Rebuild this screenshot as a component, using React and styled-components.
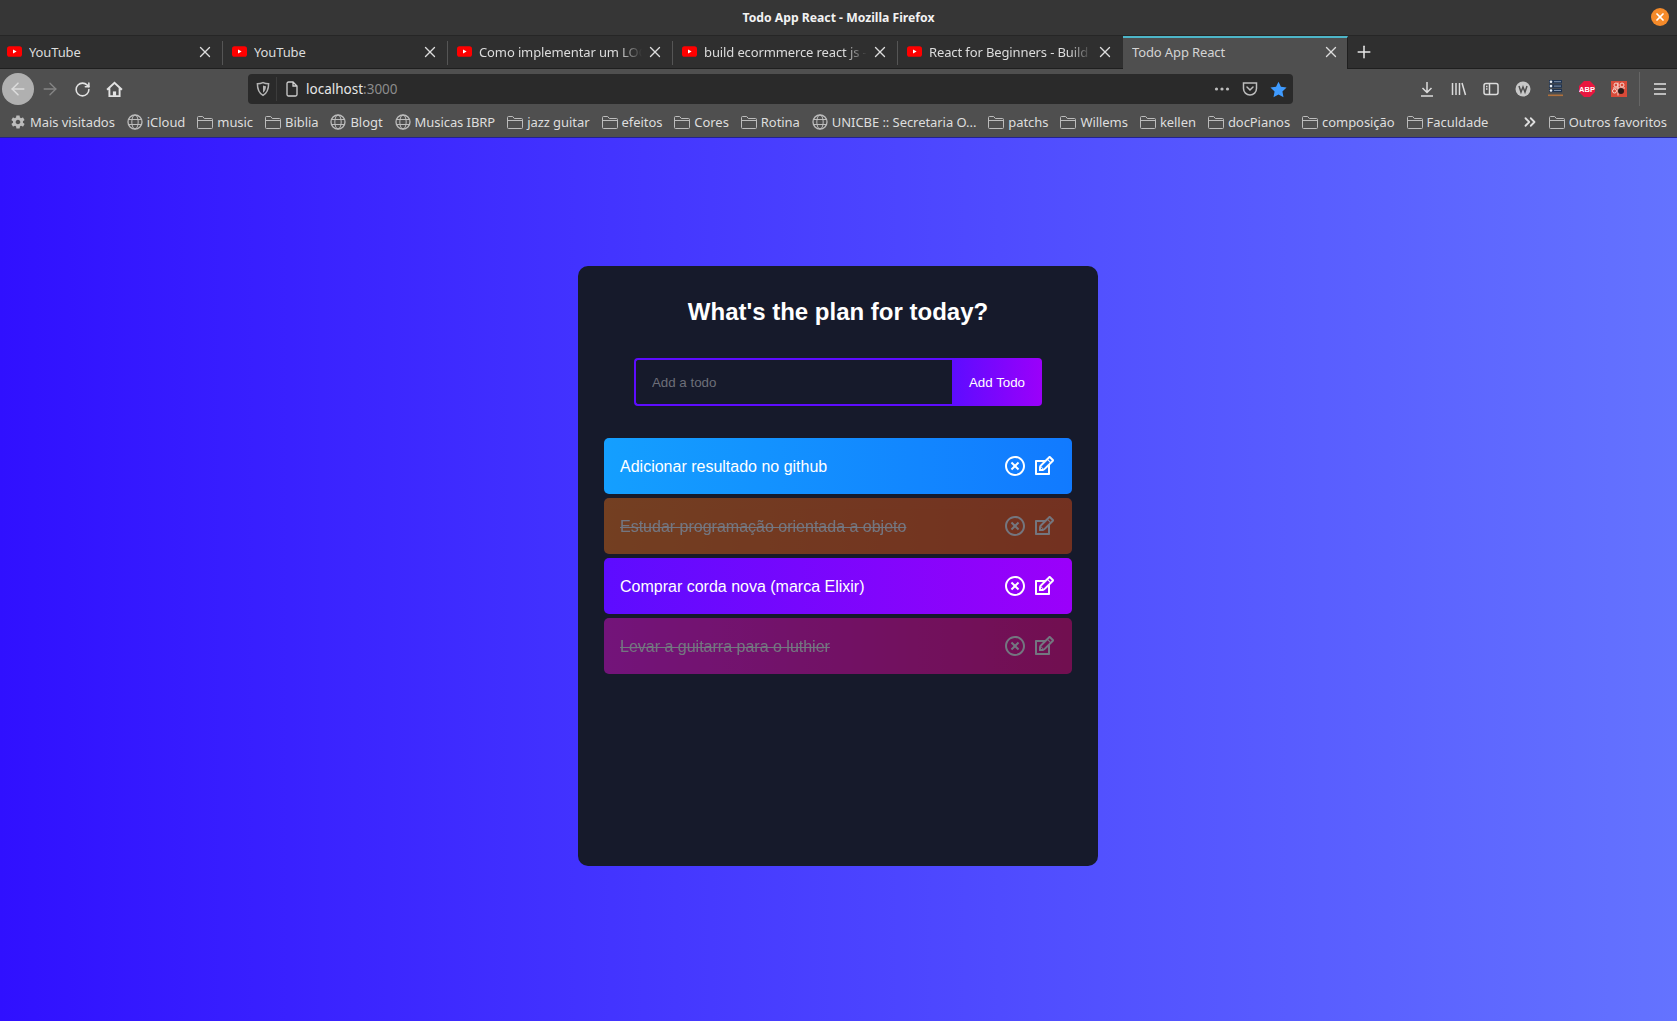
import styled, { createGlobalStyle } from 'styled-components';
import {
  X, ArrowLeft, ArrowRight, RotateCw, Plus, ChevronsRight,
} from 'lucide-react';
import { RiCloseCircleLine } from 'react-icons/ri';
import { TiEdit } from 'react-icons/ti';
import { IoMdSettings } from 'react-icons/io';

const tabs = [
  { title: 'YouTube', yt: true },
  { title: 'YouTube', yt: true },
  { title: 'Como implementar um LOG', yt: true, fade: true },
  { title: 'build ecormmerce react js -', yt: true, fade: true },
  { title: 'React for Beginners - Build', yt: true, fade: true },
  { title: 'Todo App React', active: true },
];

const bookmarks = [
  { label: 'Mais visitados', icon: 'gear' },
  { label: 'iCloud', icon: 'globe' },
  { label: 'music' },
  { label: 'Biblia' },
  { label: 'Blogt', icon: 'globe' },
  { label: 'Musicas IBRP', icon: 'globe' },
  { label: 'jazz guitar' },
  { label: 'efeitos' },
  { label: 'Cores' },
  { label: 'Rotina' },
  { label: 'UNICBE :: Secretaria O...', icon: 'globe' },
  { label: 'patchs' },
  { label: 'Willems' },
  { label: 'kellen' },
  { label: 'docPianos' },
  { label: 'composição' },
  { label: 'Faculdade' },
];

const todos = [
  { id: 1, text: 'Adicionar resultado no github', tone: 'blue' },
  { id: 2, text: 'Estudar programação orientada a objeto', tone: 'orange', done: true },
  { id: 3, text: 'Comprar corda nova (marca Elixir)', tone: 'purple' },
  { id: 4, text: 'Levar a guitarra para o luthier', tone: 'pink', done: true },
];

const gradients = {
  blue: 'rgb(20, 159, 255), rgb(17, 122, 255)',
  orange: 'rgb(255, 118, 20), rgb(255, 84, 17)',
  purple: 'rgb(93, 12, 255), rgb(155, 0, 250)',
  pink: 'rgb(255, 12, 241), rgb(250, 0, 135)',
};

const GlobalStyle = createGlobalStyle`
  * { box-sizing: border-box; }
  html, body { margin: 0; padding: 0; height: 100%; overflow: hidden; }
  #root { height: 100%; }
`;

const Window = styled.div`
  display: flex;
  flex-direction: column;
  height: 100%;
  font-family: "Noto Sans", sans-serif;
  color: #e0e0e0;
`;

const TitleBar = styled.header`
  position: relative;
  display: flex;
  align-items: center;
  justify-content: center;
  height: 36px;
  padding-bottom: 1px;
  background: #363636;
  border-bottom: 1px solid #262626;
  color: #f2f2f2;
  font-size: 12.2px;
  font-weight: 700;
`;

const CloseDot = styled.span`
  position: absolute;
  right: 8px;
  top: 8px;
  width: 18px;
  height: 18px;
  border-radius: 50%;
  background: #f48a2a;
  color: #fff;
  display: flex;
  align-items: center;
  justify-content: center;
`;

const TabStrip = styled.div`
  display: flex;
  height: 33px;
  background: #2f2f2f;
  border-bottom: 1px solid #1f1f1f;
`;

const Tab = styled.div`
  position: relative;
  display: flex;
  align-items: center;
  flex: 0 0 225px;
  width: 225px;
  height: ${(p) => (p.$active ? '33px' : '32px')};
  padding: 0 9px 1px 7px;
  font-size: 13px;
  letter-spacing: -0.12px;
  color: #dcdcdc;
  svg { flex: none; }
  ${(p) => p.$active && `
    margin-left: -2px;
    background: #4f4f4f;
    border-top: 2px solid #4db6c9;
    border-right: 1px solid #1f1f1f;
    padding: 0 5px 3px 9px;
    color: #d4d4d4;
    z-index: 1;
  `}
  ${(p) => p.$divider && `
    &::after {
      content: '';
      position: absolute;
      right: 2px;
      top: 5px;
      bottom: 3px;
      width: 1px;
      background: #555;
    }
  `}
`;

const TabTitle = styled.span`
  flex: 1;
  min-width: 0;
  margin-left: ${(p) => (p.$noIcon ? '0' : '7px')};
  white-space: nowrap;
  overflow: hidden;
  ${(p) => p.$fade && `
    -webkit-mask-image: linear-gradient(90deg, #000 86%, transparent 100%);
    mask-image: linear-gradient(90deg, #000 86%, transparent 100%);
  `}
`;

const TabClose = styled.span`
  display: flex;
  margin-left: 4px;
  margin-right: 2px;
  color: #dcdcdc;
`;

const NewTab = styled.span`
  display: flex;
  align-items: center;
  margin-left: 6px;
  padding-bottom: 1px;
  color: #e8e8e8;
`;

const Toolbar = styled.div`
  display: flex;
  align-items: center;
  height: 40px;
  background: #4f4f4f;
  padding: 0 1px 0 2px;
`;

const NavButton = styled.span`
  display: flex;
  align-items: center;
  justify-content: center;
  flex: 0 0 32px;
  height: 32px;
  color: ${(p) => (p.$dim ? '#858585' : '#e2e2e2')};
  ${(p) => p.$back && `
    border-radius: 50%;
    background: #b0b0b0;
    color: #dcdcdc;
  `}
`;

const UrlBar = styled.div`
  display: flex;
  align-items: center;
  width: 1045px;
  height: 30px;
  margin-left: 118px;
  padding: 0 1px 0 7px;
  border-radius: 4px;
  background: #2a2a2a;
  font-size: 13.5px;
  color: #e6e6e6;
`;

const UrlGlyph = styled.span`
  display: flex;
  color: ${(p) => p.$color};
`;

const UrlDivider = styled.span`
  width: 1px;
  height: 24px;
  margin: 0 7px 0 5px;
  background: #3c3c3c;
`;

const UrlText = styled.span`
  flex: 1;
  margin-left: 6px;
  span { color: #8c8c8c; }
`;

const UrlAction = styled.span`
  display: flex;
  align-items: center;
  justify-content: center;
  width: 28px;
  color: #bdbdbd;
`;

const ToolGroup = styled.div`
  display: flex;
  align-items: center;
  margin-left: auto;
`;

const ToolSeparator = styled.span`
  width: 1px;
  height: 34px;
  margin: 0 4px;
  background: #666;
`;

const Bookmarks = styled.nav`
  display: flex;
  align-items: center;
  height: 28px;
  background: #4f4f4f;
  padding: 0 10px 3px;
  font-size: 13px;
  letter-spacing: -0.06px;
  color: #dedede;
  white-space: nowrap;
`;

const Bookmark = styled.span`
  display: flex;
  align-items: center;
  gap: 4px;
  margin-right: 12px;
  svg { flex: none; color: #bcbcbc; }
  &:last-child { margin-right: 0; }
`;

const BookmarksEnd = styled.div`
  display: flex;
  align-items: center;
  margin-left: auto;
  gap: 10px;
`;

const Page = styled.main`
  flex: 1;
  padding-right: 1px;
  background: linear-gradient(90deg, rgb(48, 16, 255) 0%, rgb(100, 115, 255) 100%);
  border-top: 1px solid #23238f;
`;

const TodoCard = styled.section`
  display: flex;
  flex-direction: column;
  align-items: center;
  width: 520px;
  min-height: 600px;
  margin: 128px auto 0;
  padding-bottom: 32px;
  border-radius: 10px;
  background: #161a2b;
  font-family: "Liberation Sans", Arial, sans-serif;
  text-align: center;
`;

const Heading = styled.h1`
  margin: 32px 0;
  font-size: 24px;
  font-weight: 700;
  color: #fff;
`;

const TodoForm = styled.form`
  display: flex;
  height: 48px;
  margin-bottom: 32px;
`;

const TodoInput = styled.input`
  width: 318px;
  padding: 14px 32px 14px 16px;
  border: 2px solid #5d0cff;
  border-right: 0;
  border-radius: 4px 0 0 4px;
  outline: none;
  background: transparent;
  color: #fff;
  font-family: inherit;
  font-size: 13.33px;

  &::placeholder { color: #6d6f79; opacity: 1; }
`;

const AddButton = styled.button`
  padding: 16px 17px;
  border: none;
  border-radius: 0 4px 4px 0;
  outline: none;
  background: linear-gradient(90deg, #5d0cff 0%, #9b00fa 100%);
  color: #fff;
  font-family: inherit;
  font-size: 13.33px;
`;

const TodoRow = styled.div`
  display: flex;
  align-items: center;
  justify-content: space-between;
  width: 468px;
  height: 56px;
  margin: 0 0 4px;
  padding: 16px;
  border-radius: 5px;
  background: linear-gradient(90deg, ${(p) => gradients[p.$tone]});
  color: #fff;
  font-size: 16px;
  ${(p) => p.$done && 'text-decoration: line-through; opacity: 0.4;'}
`;

const TodoText = styled.span`
  padding-top: 2px;
`;

const RowIcons = styled.div`
  display: flex;
  align-items: center;
  font-size: 24px;
`;

const DeleteIcon = styled(RiCloseCircleLine)`
  margin-right: 5px;
`;

const YouTubeIcon = () => (
  <svg width="15" height="11" viewBox="0 0 14 10" aria-hidden="true">
    <rect width="14" height="10" rx="2.4" fill="#f00" />
    <path d="M5.6 3.1 9 5 5.6 6.9z" fill="#fff" />
  </svg>
);

const FolderIcon = () => (
  <svg width="16" height="16" viewBox="0 0 16 16" fill="none" stroke="currentColor" aria-hidden="true">
    <path d="M.5 13.500v-10a1 1 0 0 1 1-1h4.200l1.600 2h7.200a1 1 0 0 1 1 1v8a1 1 0 0 1-1 1h-13a1 1 0 0 1-1-1zM.5 6.500h15" />
  </svg>
);

const GlobeIcon = () => (
  <svg width="16" height="16" viewBox="0 0 16 16" fill="none" stroke="currentColor" aria-hidden="true">
    <circle cx="8" cy="8" r="7" strokeWidth="1.3" />
    <ellipse cx="8" cy="8" rx="3.2" ry="7" />
    <path d="M1.400 5.500h13.200M1.400 10.500h13.200" />
  </svg>
);

const HomeIcon = () => (
  <svg width="17" height="17" viewBox="0 0 16 16" fill="none" stroke="currentColor" strokeWidth="1.8" aria-hidden="true">
    <path d="M1 8.200 8 1.600l7 6.600M3.200 6.800v7.400h9.600V6.800" />
    <path d="M6.500 14V9.800h3V14" fill="currentColor" stroke="none" />
  </svg>
);

const ShieldIcon = () => (
  <svg width="16" height="16" viewBox="0 0 16 16" fill="none" stroke="currentColor" strokeWidth="1.5" aria-hidden="true">
    <path d="M8 1.600c2 .9 3.900 1.200 5.600 1.200 0 5.600-1.600 9.400-5.600 11.600C4 12.200 2.400 8.400 2.400 2.800 4.100 2.800 6 2.500 8 1.600z" />
    <path d="M8 4.500c1 .4 2 .6 3 .7-.1 3-1 5-3 6.500z" fill="currentColor" stroke="none" />
  </svg>
);

const PageIcon = () => (
  <svg width="16" height="16" viewBox="0 0 16 16" fill="none" stroke="currentColor" strokeWidth="1.3" aria-hidden="true">
    <path d="M3 2.500A1.500 1.500 0 0 1 4.500 1H9l4 4v8.500a1.500 1.500 0 0 1-1.500 1.500h-7A1.500 1.500 0 0 1 3 13.500zM9 1v4h4" />
  </svg>
);

const PocketIcon = () => (
  <svg width="16" height="16" viewBox="0 0 16 16" fill="none" stroke="currentColor" strokeWidth="1.5" aria-hidden="true">
    <path d="M1.500 2h13v5.500a6.500 6.500 0 0 1-13 0z" />
    <path d="M5 6l3 3 3-3" strokeLinecap="round" />
  </svg>
);

const StarIcon = () => (
  <svg width="17" height="17" viewBox="0 0 16 16" aria-hidden="true">
    <path d="M8 .6l2.300 4.900 5.300.7-3.900 3.700 1 5.300L8 12.700l-4.700 2.500 1-5.300L.4 6.200l5.300-.7z" fill="#3f9bff" />
  </svg>
);

const DotsIcon = () => (
  <svg width="16" height="16" viewBox="0 0 16 16" fill="currentColor" aria-hidden="true">
    <circle cx="2.500" cy="8" r="1.600" />
    <circle cx="8" cy="8" r="1.600" />
    <circle cx="13.500" cy="8" r="1.600" />
  </svg>
);

const DownloadIcon = () => (
  <svg width="16" height="16" viewBox="0 0 16 16" fill="none" stroke="#dcdcdc" strokeWidth="1.500" aria-hidden="true">
    <path d="M8 1v10M3.500 7 8 11.500 12.500 7M2 15h12" />
  </svg>
);

const LibraryIcon = () => (
  <svg width="16" height="16" viewBox="0 0 16 16" fill="none" stroke="#dcdcdc" strokeWidth="1.500" aria-hidden="true">
    <path d="M1.500 2v12M5 2v12M8.500 2v12M11 2l3.500 12" />
  </svg>
);

const SidebarIcon = () => (
  <svg width="16" height="16" viewBox="0 0 16 16" fill="none" stroke="#dcdcdc" strokeWidth="1.500" aria-hidden="true">
    <rect x="1" y="2.500" width="14" height="11" rx="2" />
    <path d="M6.500 2.500v11M3 5.500h1.500M3 8h1.500" />
  </svg>
);

const WikiIcon = () => (
  <svg width="16" height="16" viewBox="0 0 16 16" aria-hidden="true">
    <circle cx="8" cy="8" r="7.500" fill="#c8c8c8" />
    <path d="M4 5l2 6 2-5 2 5 2-6" fill="none" stroke="#4f4f4f" strokeWidth="1.500" />
  </svg>
);

const ListIcon = () => (
  <svg width="15" height="18" viewBox="0 0 15 18" aria-hidden="true">
    <rect x="1" y="0" width="13" height="3.400" fill="#1f3350" />
    <rect x="1" y="4.400" width="13" height="3.400" fill="#1f3350" />
    <rect x="1" y="8.800" width="13" height="3.400" fill="#1f3350" />
    <circle cx="3" cy="1.700" r="1.300" fill="#e8eef5" />
    <circle cx="3" cy="6.100" r="1.300" fill="#e8eef5" />
    <circle cx="3" cy="10.500" r="1.300" fill="#e8eef5" />
    <path d="M6 1.700h7M6 6.100h7M6 10.500h7" stroke="#7f93ad" />
    <rect y="14.500" width="15" height="1.600" fill="#b0703c" />
  </svg>
);

const AbpIcon = () => (
  <svg width="16" height="16" viewBox="0 0 16 16" aria-hidden="true">
    <path d="M5 0h6l5 5v6l-5 5H5l-5-5V5z" fill="#e8173f" />
    <text x="8" y="10.600" fontSize="7.500" fontWeight="700" fontFamily="Liberation Sans, sans-serif" textAnchor="middle" fill="#fff">ABP</text>
  </svg>
);

const BugIcon = () => (
  <svg width="16" height="16" viewBox="0 0 16 16" aria-hidden="true">
    <rect width="16" height="16" fill="#d94a38" />
    <circle cx="5" cy="4" r="2" fill="none" stroke="#f7d6cf" />
    <circle cx="11" cy="4" r="2" fill="none" stroke="#f7d6cf" />
    <circle cx="3.500" cy="10" r="2" fill="none" stroke="#f7d6cf" />
    <path d="M2 7h12M7 1.500v13" stroke="#f7d6cf" />
    <circle cx="10" cy="10" r="3" fill="#2a1a18" />
  </svg>
);

const MenuIcon = () => (
  <svg width="16" height="16" viewBox="0 0 16 16" fill="none" stroke="#e2e2e2" strokeWidth="1.600" aria-hidden="true">
    <path d="M2 3h12M2 8h12M2 13h12" />
  </svg>
);

const toolIcons = [DownloadIcon, LibraryIcon, SidebarIcon, WikiIcon, ListIcon, AbpIcon, BugIcon];

const BookmarkIcon = ({ type }) => {
  if (type === 'gear') return <IoMdSettings size={16} />;
  if (type === 'globe') return <GlobeIcon />;
  return <FolderIcon />;
};

const App = () => (
  <Window>
    <GlobalStyle />
    <TitleBar>
      Todo App React - Mozilla Firefox
      <CloseDot><X size={12} strokeWidth={3.5} /></CloseDot>
    </TitleBar>

    <TabStrip>
      {tabs.map((tab, i) => (
        <Tab key={tab.title + i} $active={tab.active} $divider={i < 4}>
          {tab.yt && <YouTubeIcon />}
          <TabTitle $fade={tab.fade} $noIcon={!tab.yt}>{tab.title}</TabTitle>
          <TabClose><X size={18} strokeWidth={1.8} /></TabClose>
        </Tab>
      ))}
      <NewTab><Plus size={20} strokeWidth={1.8} /></NewTab>
    </TabStrip>

    <Toolbar>
      <NavButton $back><ArrowLeft size={20} strokeWidth={1.8} /></NavButton>
      <NavButton $dim><ArrowRight size={20} strokeWidth={1.6} /></NavButton>
      <NavButton><RotateCw size={17} strokeWidth={2.2} /></NavButton>
      <NavButton><HomeIcon /></NavButton>
      <UrlBar>
        <UrlGlyph $color="#b4b4b4"><ShieldIcon /></UrlGlyph>
        <UrlDivider />
        <UrlGlyph $color="#cfcfcf"><PageIcon /></UrlGlyph>
        <UrlText>localhost<span>:3000</span></UrlText>
        <UrlAction><DotsIcon /></UrlAction>
        <UrlAction><PocketIcon /></UrlAction>
        <UrlAction><StarIcon /></UrlAction>
      </UrlBar>
      <ToolGroup>
        {toolIcons.map((Icon) => (
          <NavButton key={Icon.name}><Icon /></NavButton>
        ))}
        <ToolSeparator />
        <NavButton><MenuIcon /></NavButton>
      </ToolGroup>
    </Toolbar>

    <Bookmarks>
      {bookmarks.map((b) => (
        <Bookmark key={b.label}>
          <BookmarkIcon type={b.icon} />
          {b.label}
        </Bookmark>
      ))}
      <BookmarksEnd>
        <ChevronsRight size={18} color="#dedede" strokeWidth={2.4} />
        <Bookmark>
          <FolderIcon />
          Outros favoritos
        </Bookmark>
      </BookmarksEnd>
    </Bookmarks>

    <Page>
      <TodoCard>
        <Heading>What's the plan for today?</Heading>
        <TodoForm onSubmit={(e) => e.preventDefault()}>
          <TodoInput placeholder="Add a todo" name="text" />
          <AddButton type="submit">Add Todo</AddButton>
        </TodoForm>
        {todos.map((todo) => (
          <TodoRow key={todo.id} $tone={todo.tone} $done={todo.done}>
            <TodoText>{todo.text}</TodoText>
            <RowIcons>
              <DeleteIcon />
              <TiEdit />
            </RowIcons>
          </TodoRow>
        ))}
      </TodoCard>
    </Page>
  </Window>
);

export default App;
